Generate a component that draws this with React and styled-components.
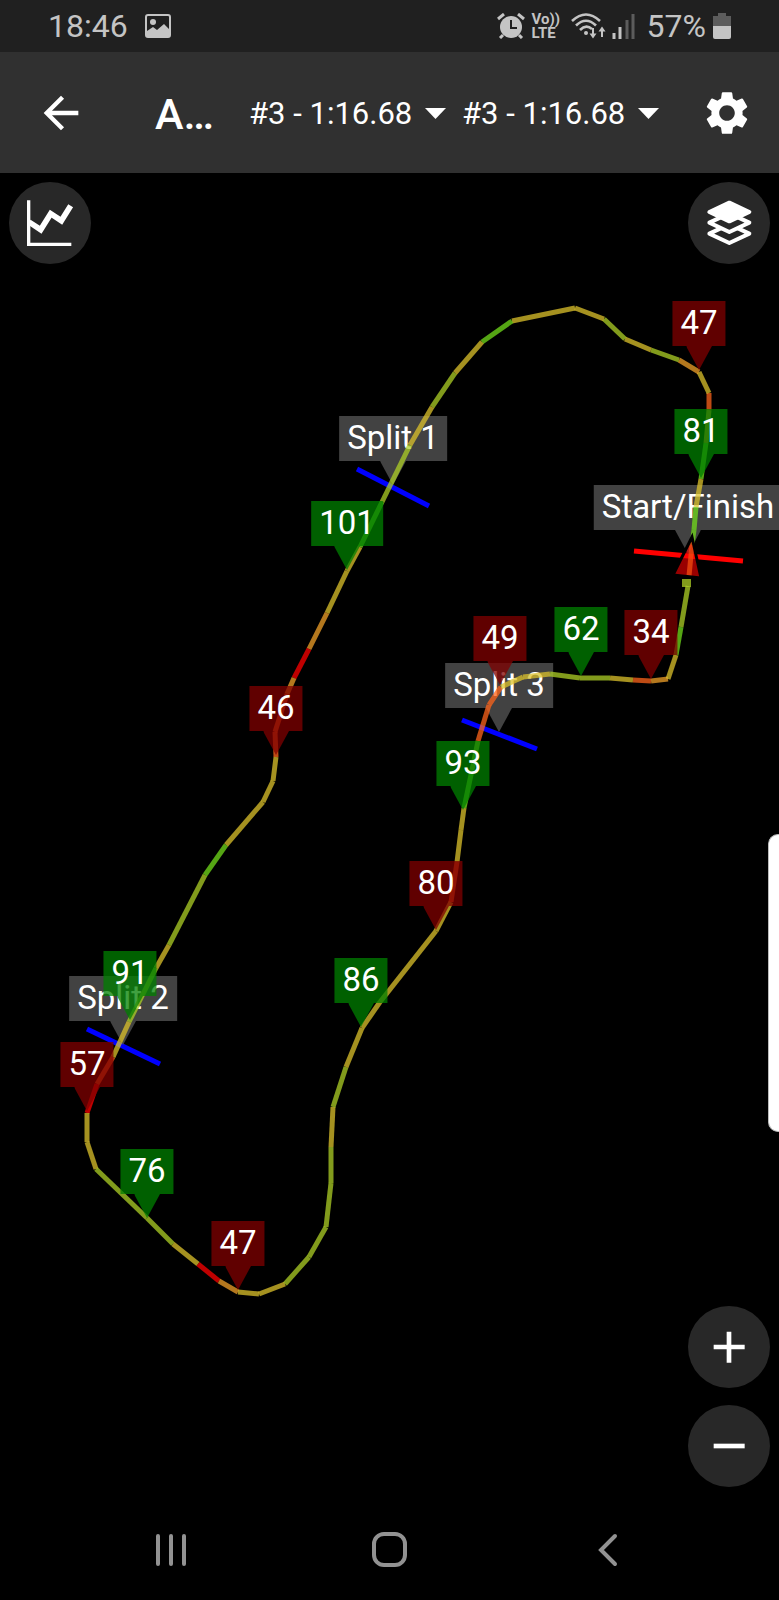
import React, { useState } from 'react';
import styled, { createGlobalStyle } from 'styled-components';
import { MdArrowBack, MdSettings } from 'react-icons/md';

const GlobalStyle = createGlobalStyle`
  * {
    box-sizing: border-box;
  }

  body {
    margin: 0;
    background-color: #000;
    color: #fff;
    font-family: Roboto, 'Liberation Sans', sans-serif;
  }
`;

const Screen = styled.div`
  display: flex;
  flex-direction: column;
  min-height: 100vh;
`;

const StatusBar = styled.div`
  display: flex;
  align-items: center;
  justify-content: space-between;
  height: 52px;
  padding: 0 48px;
  background-color: #202020;
  color: #c4c4c4;
  font-size: 32px;
  line-height: 54px;
`;

const StatusGroup = styled.div`
  display: flex;
  align-items: center;
  gap: ${(props) => props.$gap}px;
`;

const VoLte = styled.div`
  display: flex;
  flex-direction: column;
  width: 27px;
  font-size: 15px;
  font-weight: bold;
  line-height: 14px;
  white-space: nowrap;
`;

const Toolbar = styled.header`
  display: flex;
  align-items: center;
  height: 121px;
  padding: 0 26px 0 35px;
  background-color: #303030;
`;

const IconButton = styled.button`
  display: flex;
  padding: 0;
  border: none;
  background: none;
  color: #fff;
  font-size: 52px;
  cursor: pointer;
`;

const Title = styled.h1`
  flex: 1;
  margin: 0 0 0 68px;
  padding-top: 2px;
  font-size: 43px;
  font-weight: 500;
  line-height: 52px;
  white-space: nowrap;
`;

const LapPicker = styled.div`
  position: relative;
  width: 213px;
`;

const LapSelect = styled.select`
  display: block;
  width: 100%;
  padding: 2px 0 0;
  border: none;
  background: none;
  appearance: none;
  color: #fff;
  font-family: inherit;
  font-size: 31px;
  line-height: 40px;
  cursor: pointer;
`;

const Caret = styled.svg`
  position: absolute;
  top: 16px;
  right: 16px;
  pointer-events: none;
`;

const Settings = styled(IconButton)`
  margin-left: 26px;
`;

const MapArea = styled.main`
  position: relative;
  flex: 1;
  overflow: hidden;
`;

const Canvas = styled.div`
  position: relative;
  width: 100%;
  aspect-ratio: 779 / 1327;
`;

const Layer = styled.svg`
  position: absolute;
  inset: 0;
  width: 100%;
  height: 100%;
`;

const tagColors = {
  fast: 'rgba(0, 128, 0, 0.75)',
  slow: 'rgba(128, 0, 0, 0.75)',
  gate: 'rgba(88, 88, 88, 0.75)',
};

const Tag = styled.div`
  position: absolute;
  left: ${(props) => (props.$x / 779) * 100}%;
  top: ${(props) => ((props.$y - 173) / 1327) * 100}%;
  transform: translate(-50%, -100%);
  display: flex;
  flex-direction: column;
  align-items: center;
  color: ${(props) => tagColors[props.$kind]};

  &::after {
    content: '';
    width: 26px;
    height: 24px;
    background-color: currentColor;
    clip-path: polygon(0 0, 100% 0, 50% 100%);
  }
`;

const TagText = styled.span`
  padding: 0 8px 2px;
  background-color: ${(props) => tagColors[props.$kind]};
  color: #fff;
  font-size: 33px;
  line-height: 43px;
  white-space: nowrap;
`;

const Controls = styled.div`
  position: absolute;
  inset: 9px 9px 13px;
  display: flex;
  justify-content: space-between;
  pointer-events: none;
`;

const ControlColumn = styled.div`
  display: flex;
  flex-direction: column;
  gap: 17px;
`;

const RoundButton = styled.button`
  width: 82px;
  height: 82px;
  margin-top: ${(props) => (props.$push ? 'auto' : 0)};
  padding: 0;
  border: none;
  border-radius: 50%;
  background-color: #282828;
  cursor: pointer;
  pointer-events: auto;

  svg {
    display: block;
    width: 100%;
    height: 100%;
  }
`;

const EdgeHandle = styled.div`
  position: absolute;
  top: 661px;
  right: 0;
  width: 11px;
  height: 298px;
  border: 1px solid #bbb;
  border-right: none;
  border-radius: 10px 0 0 10px;
  background-color: #fff;
`;

const NavBar = styled.nav`
  display: grid;
  grid-template-columns: repeat(3, 1fr);
  height: 100px;
  padding: 0 8%;
`;

const NavButton = styled.button`
  display: flex;
  align-items: center;
  justify-content: center;
  padding: 0;
  border: none;
  background: none;
  color: #929292;
  cursor: pointer;
`;

const VIEW_BOX = '0 173 779 1327';

const Y = '#dcc12b'; // steady
const L = '#adcf25'; // light acceleration
const G = '#71dc1b'; // full acceleration
const O = '#f0a028'; // light braking
const R = '#fd641b'; // braking
const B = '#ff0000'; // hard braking

// x, y, colour of the stretch that leads to the point
const track = [
  [689, 576],
  [692, 545, Y],
  [694, 530, G],
  [696, 507, G],
  [701, 479, Y],
  [706, 443, G],
  [709, 410, O],
  [709, 393, R],
  [699, 372, Y],
  [679, 360, O],
  [651, 350, L],
  [625, 339, Y],
  [604, 319, L],
  [575, 308, Y],
  [512, 321, Y],
  [482, 342, G],
  [455, 373, Y],
  [432, 407, L],
  [410, 445, Y],
  [382, 502, L],
  [360, 547, G],
  [347, 571, Y],
  [327, 613, Y],
  [309, 649, O],
  [294, 678, B],
  [287, 694, O],
  [275, 732, R],
  [276, 757, R],
  [273, 781, Y],
  [263, 802, Y],
  [226, 845, Y],
  [205, 875, G],
  [169, 945, L],
  [156, 968, Y],
  [129, 1022, L],
  [113, 1057, Y],
  [97, 1084, R],
  [87, 1113, B],
  [87, 1142, Y],
  [96, 1169, Y],
  [147, 1218, L],
  [173, 1244, L],
  [198, 1264, Y],
  [219, 1281, B],
  [238, 1292, O],
  [259, 1294, Y],
  [285, 1284, Y],
  [309, 1257, L],
  [326, 1227, L],
  [331, 1183, L],
  [331, 1147, L],
  [333, 1107, Y],
  [346, 1067, L],
  [362, 1028, Y],
  [380, 1002, Y],
  [436, 931, Y],
  [451, 902, Y],
  [457, 862, R],
  [461, 830, Y],
  [464, 808, Y],
  [472, 770, G],
  [478, 741, L],
  [489, 705, R],
  [501, 687, R],
  [523, 677, Y],
  [550, 674, Y],
  [580, 678, L],
  [610, 678, L],
  [633, 680, Y],
  [651, 681, R],
  [668, 679, O],
  [676, 655, Y],
  [681, 627, G],
  [688, 586, L],
];

const gates = [
  { name: 'Split 1', x: 393, y: 485, line: [357, 469, 429, 506] },
  { name: 'Split 2', x: 123, y: 1045, line: [87, 1029, 160, 1064] },
  { name: 'Split 3', x: 499, y: 732, line: [462, 720, 537, 749] },
  { name: 'Start/Finish', x: 688, y: 554, line: [634, 551, 743, 561], finish: true },
];

const speeds = [
  { value: 47, x: 699, y: 370, kind: 'slow' },
  { value: 81, x: 701, y: 478, kind: 'fast' },
  { value: 101, x: 347, y: 570, kind: 'fast' },
  { value: 46, x: 276, y: 755, kind: 'slow' },
  { value: 91, x: 130, y: 1020, kind: 'fast' },
  { value: 57, x: 87, y: 1111, kind: 'slow' },
  { value: 76, x: 147, y: 1218, kind: 'fast' },
  { value: 47, x: 238, y: 1290, kind: 'slow' },
  { value: 86, x: 361, y: 1027, kind: 'fast' },
  { value: 80, x: 436, y: 930, kind: 'slow' },
  { value: 93, x: 463, y: 810, kind: 'fast' },
  { value: 49, x: 500, y: 685, kind: 'slow' },
  { value: 62, x: 581, y: 676, kind: 'fast' },
  { value: 34, x: 651, y: 679, kind: 'slow' },
];

function PictureIcon() {
  return (
    <svg width="26" height="24" viewBox="0 0 26 24" aria-hidden="true">
      <rect x="1" y="1" width="24" height="22" rx="2" fill="none" stroke="currentColor" strokeWidth="2" />
      <circle cx="8" cy="8" r="3" fill="currentColor" />
      <path d="M2 17l6-4 4 3 7-6 6 6v7H2z" fill="currentColor" />
    </svg>
  );
}

function AlarmIcon() {
  return (
    <svg width="28" height="26" viewBox="0 0 28 26" aria-hidden="true">
      <circle cx="14" cy="14" r="11" fill="currentColor" />
      <path d="M1 6l6-5M27 6l-6-5M6 22l-3 3M22 22l3 3" stroke="currentColor" strokeWidth="3" />
      <path d="M14 7v8h6" fill="none" stroke="#202020" strokeWidth="2" />
    </svg>
  );
}

function WifiIcon() {
  return (
    <svg width="35" height="26" viewBox="0 0 35 26" aria-hidden="true">
      <g fill="none" stroke="currentColor" strokeWidth="2.6">
        <path d="M1 8Q15-5 29 8M5 12.500Q15 3 25 12.500M9 17Q15 11 21 16" />
      </g>
      <circle cx="15" cy="20" r="2" fill="currentColor" />
      <path d="M22 15v8M31 24v-8" stroke="currentColor" strokeWidth="2" />
      <path d="M18.500 20.500h7L22 25.500zM27.500 18.500h7L31 13.500z" fill="currentColor" />
    </svg>
  );
}

function SignalIcon() {
  return (
    <svg width="23" height="26" viewBox="0 0 23 26" aria-hidden="true">
      <path d="M2 20v6M8 14v12" stroke="currentColor" strokeWidth="3" />
      <path d="M15 7v19M21 1v25" stroke="#5c5c5c" strokeWidth="3" />
    </svg>
  );
}

function BatteryIcon() {
  return (
    <svg width="18" height="26" viewBox="0 0 18 26" aria-hidden="true">
      <path d="M5 0h8v3h5v10H0V3h5z" fill="#5c5c5c" />
      <path d="M0 13h18v11q0 2-2 2H2q-2 0-2-2z" fill="currentColor" />
    </svg>
  );
}

function ChartIcon() {
  return (
    <svg viewBox="0 0 246 246" fill="none" stroke="#fff" aria-hidden="true">
      <path d="M59 55v132h128" strokeWidth="10" />
      <path d="M60 120l35 23 30-48 32 21 28-45" strokeWidth="17" />
    </svg>
  );
}

function LayersIcon() {
  return (
    <svg viewBox="0 0 246 246" stroke="#fff" strokeWidth="12" strokeLinejoin="round" aria-hidden="true">
      <path d="M64 155l60-28 60 28-60 28z" fill="#282828" />
      <path d="M64 122l60-28 60 28-60 28z" fill="#282828" />
      <path d="M64 90l60-28 60 28-60 28z" fill="#fff" />
    </svg>
  );
}

function LapPickerField({ label }) {
  const [lap, setLap] = useState('3');

  return (
    <LapPicker>
      <LapSelect aria-label={label} value={lap} onChange={(e) => setLap(e.target.value)}>
        <option value="3">#3 - 1:16.68</option>
      </LapSelect>
      <Caret width="21" height="11" viewBox="0 0 21 11" aria-hidden="true">
        <path d="M0 0h21L10.500 11z" fill="#fff" />
      </Caret>
    </LapPicker>
  );
}

function TrackMap() {
  return (
    <Canvas>
      <Layer viewBox={VIEW_BOX} aria-hidden="true">
        {gates.map(({ name, line, finish }) => (
          <line
            key={name}
            x1={line[0]}
            y1={line[1]}
            x2={line[2]}
            y2={line[3]}
            stroke={finish ? '#ff0000' : '#0000ff'}
            strokeWidth="5"
          />
        ))}
      </Layer>

      {gates.map((gate) => (
        <Tag key={gate.name} $x={gate.x} $y={gate.y} $kind="gate">
          <TagText $kind="gate">{gate.name}</TagText>
        </Tag>
      ))}

      <Layer viewBox={VIEW_BOX} role="img" aria-label="Track">
        <g strokeWidth="5" strokeOpacity="0.75">
          {track.slice(1).map(([x, y, color], i) => (
            <line key={i} x1={track[i][0]} y1={track[i][1]} x2={x} y2={y} stroke={color} />
          ))}
          <path d="M682 583h9" stroke={L} strokeWidth="8" />
        </g>
        <path
          d="M692 537l9 41-28-3z"
          fill="#ff0000"
          fillOpacity="0.6"
          stroke="#000"
          strokeWidth="3"
        />
      </Layer>

      {speeds.map((speed, i) => (
        <Tag key={i} $x={speed.x} $y={speed.y} $kind={speed.kind}>
          <TagText $kind={speed.kind}>{speed.value}</TagText>
        </Tag>
      ))}
    </Canvas>
  );
}

function App() {
  return (
    <Screen>
      <GlobalStyle />
      <StatusBar>
        <StatusGroup $gap={17}>
          <span>18:46</span>
          <PictureIcon />
        </StatusGroup>
        <StatusGroup $gap={12}>
          <StatusGroup $gap={7}>
            <AlarmIcon />
            <VoLte>
              <span>Vo))</span>
              <span>LTE</span>
            </VoLte>
          </StatusGroup>
          <StatusGroup $gap={6}>
            <WifiIcon />
            <SignalIcon />
          </StatusGroup>
          <StatusGroup $gap={7}>
            <span>57%</span>
            <BatteryIcon />
          </StatusGroup>
        </StatusGroup>
      </StatusBar>

      <Toolbar>
        <IconButton aria-label="Back">
          <MdArrowBack />
        </IconButton>
        <Title>A…</Title>
        <LapPickerField label="Lap" />
        <LapPickerField label="Compared lap" />
        <Settings aria-label="Settings">
          <MdSettings />
        </Settings>
      </Toolbar>

      <MapArea>
        <TrackMap />
        <Controls>
          <ControlColumn>
            <RoundButton aria-label="Chart">
              <ChartIcon />
            </RoundButton>
          </ControlColumn>
          <ControlColumn>
            <RoundButton aria-label="Layers">
              <LayersIcon />
            </RoundButton>
            <RoundButton aria-label="Zoom in" $push>
              <svg viewBox="0 0 246 246" stroke="#fff" strokeWidth="14" aria-hidden="true">
                <path d="M77 123h93M123 77v93" />
              </svg>
            </RoundButton>
            <RoundButton aria-label="Zoom out">
              <svg viewBox="0 0 246 246" stroke="#fff" strokeWidth="14" aria-hidden="true">
                <path d="M77 123h93" />
              </svg>
            </RoundButton>
          </ControlColumn>
        </Controls>
        <EdgeHandle />
      </MapArea>

      <NavBar>
        <NavButton aria-label="Recent apps">
          <svg width="32" height="34" viewBox="0 0 32 34" stroke="currentColor" strokeWidth="4" strokeLinecap="round">
            <path d="M3 3v28M16 3v28M29 3v28" />
          </svg>
        </NavButton>
        <NavButton aria-label="Home">
          <svg width="36" height="36" viewBox="0 0 36 36" fill="none" stroke="currentColor" strokeWidth="4">
            <rect x="2" y="2" width="31" height="31" rx="10" />
          </svg>
        </NavButton>
        <NavButton aria-label="Go back">
          <svg width="20" height="34" viewBox="0 0 20 34" fill="none" stroke="currentColor" strokeWidth="4" strokeLinecap="round">
            <path d="M17 3L3 17l14 14" />
          </svg>
        </NavButton>
      </NavBar>
    </Screen>
  );
}

export default App;
